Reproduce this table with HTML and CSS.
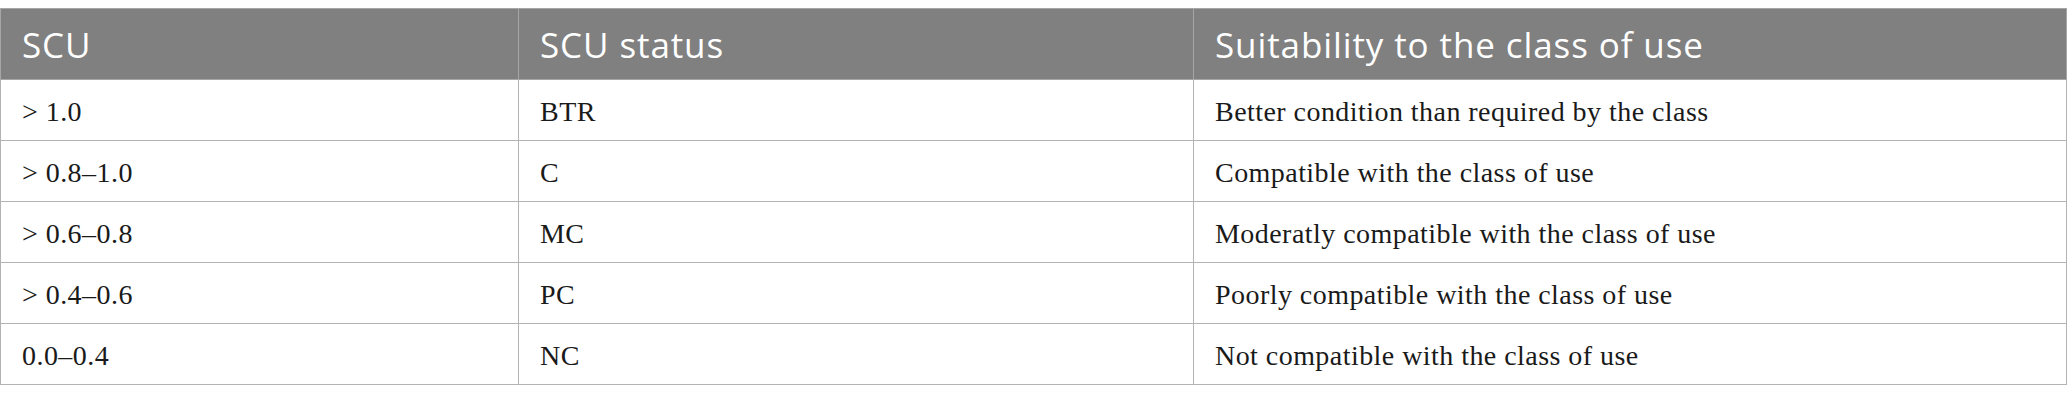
FILE: index.html
```html
<!DOCTYPE html>
<html>
<head>
<meta charset="utf-8">
<link rel="stylesheet" href="styles.css">
</head>
<body>
<table class="grid">
  <colgroup>
    <col class="c1">
    <col class="c2">
    <col class="c3">
  </colgroup>
  <thead>
    <tr><th>SCU</th><th>SCU status</th><th>Suitability to the class of use</th></tr>
  </thead>
  <tbody>
    <tr><td>&gt; 1.0</td><td>BTR</td><td>Better condition than required by the class</td></tr>
    <tr><td>&gt; 0.8–1.0</td><td>C</td><td>Compatible with the class of use</td></tr>
    <tr><td>&gt; 0.6–0.8</td><td>MC</td><td>Moderatly compatible with the class of use</td></tr>
    <tr><td>&gt; 0.4–0.6</td><td>PC</td><td>Poorly compatible with the class of use</td></tr>
    <tr><td>0.0–0.4</td><td>NC</td><td>Not compatible with the class of use</td></tr>
  </tbody>
</table>
</body>
</html>
```
FILE: styles.css
```css
html, body {
  margin: 0;
  padding: 0;
  background: #ffffff;
}
body {
  padding-top: 8px;
}
.grid {
  border-collapse: collapse;
  width: 2066px;
  table-layout: fixed;
}
.c1 { width: 518px; }
.c2 { width: 675px; }
.c3 { width: 873px; }
.grid th,
.grid td {
  border: 1px solid #b3b3b3;
  text-align: left;
  vertical-align: middle;
  padding: 0 0 0 21px;
  white-space: nowrap;
}
.grid th {
  background: #808080;
  color: #ffffff;
  font-family: "Open Sans", "Liberation Sans", sans-serif;
  font-weight: 400;
  font-size: 35px;
  letter-spacing: 0.9px;
  height: 70px;
  border-color: #a6a6a6;
}
.grid td {
  color: #1a1a1a;
  font-family: "Liberation Serif", "Times New Roman", serif;
  font-size: 28px;
  letter-spacing: 0.45px;
  height: 57px;
  padding-top: 3px;
}
```
